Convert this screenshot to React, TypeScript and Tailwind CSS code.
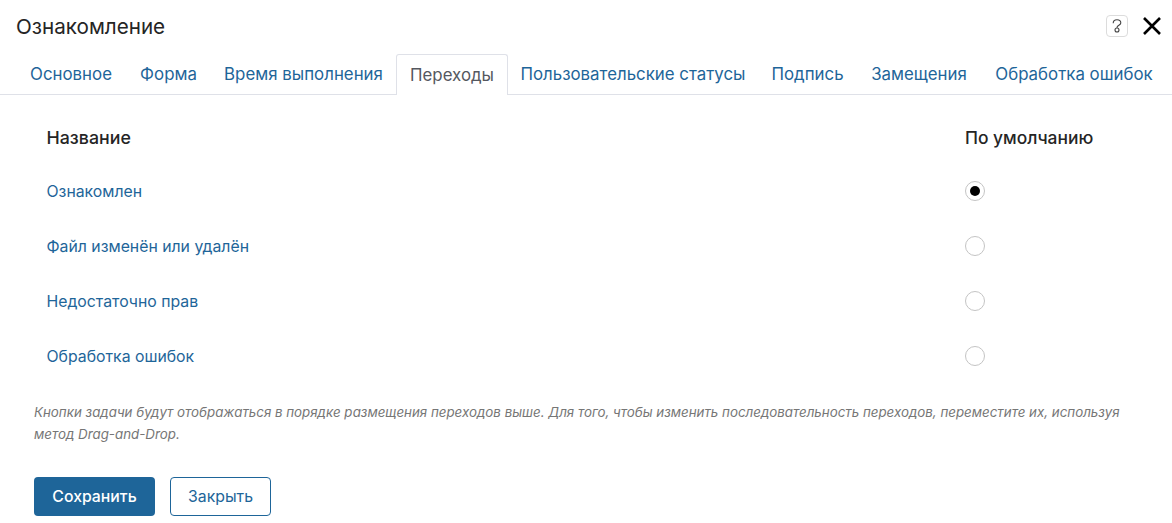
import React from "react";

const tabs = [
  { label: "Основное", w: "w-[110px]" },
  { label: "Форма", w: "w-[85px]" },
  { label: "Время выполнения", w: "w-[185px]" },
  { label: "Переходы", w: "w-[112px]" },
  { label: "Пользовательские статусы", w: "w-[250px]" },
  { label: "Подпись", w: "w-[99px]" },
  { label: "Замещения", w: "w-[124px]" },
  { label: "Обработка ошибок", w: "w-[186px]" },
];
const rows = ["Ознакомлен", "Файл изменён или удалён", "Недостаточно прав", "Обработка ошибок"];

export default function App() {
  return (
    <div className="h-[523px] w-[1172px] overflow-hidden bg-white font-['Inter',sans-serif] text-[#252525]">
      <header className="flex h-[54px] items-start justify-between pl-4 pr-[10px] pt-[15px]">
        <h1 className="text-[20.65px] leading-6">Ознакомление</h1>
        <div className="flex items-center gap-[14px]">
          <span className="flex h-[22px] w-[22px] items-center justify-center rounded-[4px] border border-[#dcdcdc]">
            <svg viewBox="0 0 10 14" className="h-[14px] w-[10px]" fill="none" stroke="#444" strokeWidth="1.1">
              <path d="M1.200 4.300C1.200 2 3 .8 5 .8s3.800 1.200 3.800 3.200c0 2.200-3.800 2.400-3.800 4.600M5 9a2 2 0 1 0 0 4A2 2 0 0 0 5 9z" />
            </svg>
          </span>
          <svg viewBox="0 0 20 20" className="h-5 w-5" stroke="#000" strokeWidth="2.600">
            <path d="M2 2l16 16M18 2L2 18" />
          </svg>
        </div>
      </header>

      <nav className="flex h-[41px] border-b border-[#dfe1e8] pl-4 text-[16.85px] leading-10">
        {tabs.map((t, i) =>
          i === 3 ? (
            <span key={t.label} className={`${t.w} h-[41px] shrink-0 rounded-t-[3px] border border-b-0 border-[#dfe1e8] bg-white text-center text-[#55585f]`}>{t.label}</span>
          ) : (
            <span key={t.label} className={`${t.w} h-10 shrink-0 text-center text-[#1e6599]`}>{t.label}</span>
          ),
        )}
      </nav>

      <main className="pl-[34px] pr-[46px]">
        <div className="flex h-[69px] items-center pl-[12.5px] pt-[17px] font-medium">
          <span className="flex-1 text-[17.8px]">Название</span>
          <span className="w-[161px] text-[17.4px]">По умолчанию</span>
        </div>
        {rows.map((r, i) => (
          <div key={r} className="flex h-[55px] items-center pl-[12.5px] text-[15.8px] text-[#1e6599]">
            <span className="flex-1">{r}</span>
            <span className="w-[161px]">
              <span className="-mt-[2px] flex h-5 w-5 items-center justify-center rounded-full border border-[#c4c4c4]">
                {i === 0 && <span className="h-[10px] w-[10px] rounded-full bg-black" />}
              </span>
            </span>
          </div>
        ))}
        <p className="mt-[17px] w-[1100px] text-[13.33px] leading-[22px] text-[#767676] italic">
          Кнопки задачи будут отображаться в порядке размещения переходов выше. Для того, чтобы изменить последовательность переходов, переместите их, используя метод Drag-and-Drop.
        </p>
        <div className="mt-[32px] flex gap-[15px] text-[15.8px]">
          <button className="h-[39px] w-[121px] rounded-[4px] bg-[#1e6599] font-medium text-white">Сохранить</button>
          <button className="h-[39px] w-[101px] rounded-[4px] border border-[#1e6599] bg-white text-[#1e6599]">Закрыть</button>
        </div>
      </main>
    </div>
  );
}
